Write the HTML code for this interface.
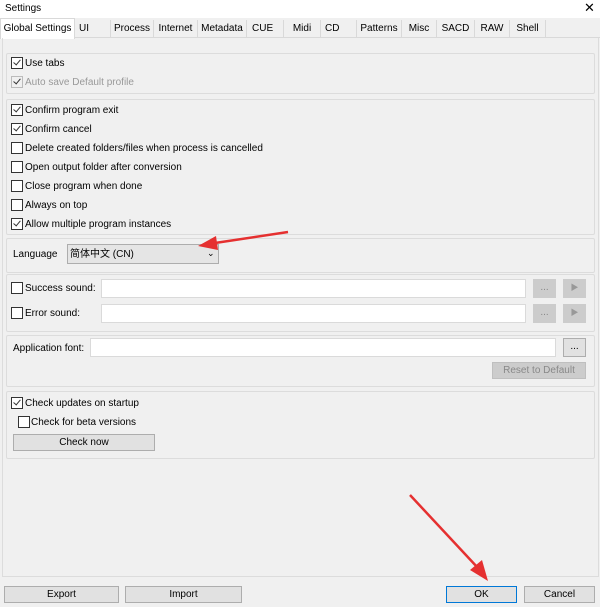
<!DOCTYPE html><html><head><style>
body{margin:0;width:600px;height:607px;background:#f0f0f0;font-family:"Liberation Sans","Noto Sans CJK SC",sans-serif;font-size:10px;color:#000;position:relative;overflow:hidden}
.a{position:absolute}
.t{position:absolute;top:20px;height:17px;line-height:18px;border-right:1px solid #d9d9d9;text-align:center;background:#f0f0f0}
.g{position:absolute;left:6px;width:587px;border:1px solid #dcdcdc;border-radius:2px;background:#f0f0f0}
.cb{position:absolute;width:10px;height:10px;border:1px solid #333;background:#fff}
.cb.c::after{content:"";position:absolute;left:3px;top:0px;width:3px;height:6px;border:solid #333;border-width:0 1.3px 1.3px 0;transform:rotate(40deg)}
.l{position:absolute;line-height:12px;margin-top:1px;margin-left:1px}
.in{position:absolute;background:#fff;border:1px solid #dadada;height:17px}
.bt{position:absolute;background:#e1e1e1;border:1px solid #adadad;text-align:center;line-height:16px;height:15px}
</style></head><body>
<div class="a" style="left:0;top:0;width:600px;height:18px;background:#fff"></div>
<div class="l" style="left:4px;top:2px">Settings</div>
<div class="l" style="left:583px;top:1px;font-size:13px">✕</div>
<div class="a" style="left:0;top:37px;width:600px;height:1px;background:#d9d9d9"></div>
<div class="t" style="left:0;top:18px;height:20px;line-height:20px;width:73px;background:#fff;border:1px solid #d9d9d9;border-bottom:none">Global Settings</div>
<div class="t" style="left:75px;text-align:left;padding-left:4px;width:31px">UI</div>
<div class="t" style="left:111px;width:42px">Process</div>
<div class="t" style="left:154px;width:43px">Internet</div>
<div class="t" style="left:198px;width:48px">Metadata</div>
<div class="t" style="left:247px;text-align:left;padding-left:5px;width:31px">CUE</div>
<div class="t" style="left:284px;width:36px">Midi</div>
<div class="t" style="left:321px;text-align:left;padding-left:4px;width:31px">CD</div>
<div class="t" style="left:357px;width:44px">Patterns</div>
<div class="t" style="left:402px;width:34px">Misc</div>
<div class="t" style="left:437px;width:37px">SACD</div>
<div class="t" style="left:475px;width:34px">RAW</div>
<div class="t" style="left:510px;width:35px">Shell</div>
<div class="a" style="left:2px;top:38px;width:595px;height:538px;border:1px solid #dcdcdc;border-top:none"></div>

<div class="g" style="top:53px;height:39px"></div>
<div class="cb c" style="left:11px;top:57px"></div><div class="l" style="left:24px;top:57px">Use tabs</div>
<div class="cb c" style="left:11px;top:76px;border-color:#bbb;background:#f0f0f0"></div><div class="l" style="left:24px;top:76px;color:#999">Auto save Default profile</div>

<div class="g" style="top:99px;height:134px"></div>
<div class="cb c" style="left:11px;top:104px"></div><div class="l" style="left:24px;top:104px">Confirm program exit</div>
<div class="cb c" style="left:11px;top:123px"></div><div class="l" style="left:24px;top:123px">Confirm cancel</div>
<div class="cb" style="left:11px;top:142px"></div><div class="l" style="left:24px;top:142px">Delete created folders/files when process is cancelled</div>
<div class="cb" style="left:11px;top:161px"></div><div class="l" style="left:24px;top:161px">Open output folder after conversion</div>
<div class="cb" style="left:11px;top:180px"></div><div class="l" style="left:24px;top:180px">Close program when done</div>
<div class="cb" style="left:11px;top:199px"></div><div class="l" style="left:24px;top:199px">Always on top</div>
<div class="cb c" style="left:11px;top:218px"></div><div class="l" style="left:24px;top:218px">Allow multiple program instances</div>

<div class="g" style="top:238px;height:33px"></div>
<div class="l" style="left:12px;top:248px">Language</div>
<div class="a" style="left:67px;top:244px;width:150px;height:18px;background:#e5e5e5;border:1px solid #adadad"></div>
<div class="l" style="left:69px;top:248px">简体中文 (CN)</div>
<div class="l" style="left:206px;top:246px;font-size:9px">⌄</div>

<div class="g" style="top:274px;height:56px"></div>
<div class="cb" style="left:11px;top:282px"></div><div class="l" style="left:24px;top:282px">Success sound:</div>
<div class="in" style="left:101px;top:279px;width:423px"></div>
<div class="bt" style="left:533px;top:279px;width:21px;height:17px;background:#ccc;border-color:#ccc;color:#888">...</div>
<div class="bt" style="left:563px;top:279px;width:21px;height:17px;background:#ccc;border-color:#ccc;color:#999;font-size:8px">▶</div>
<div class="cb" style="left:11px;top:307px"></div><div class="l" style="left:24px;top:307px">Error sound:</div>
<div class="in" style="left:101px;top:304px;width:423px"></div>
<div class="bt" style="left:533px;top:304px;width:21px;height:17px;background:#ccc;border-color:#ccc;color:#888">...</div>
<div class="bt" style="left:563px;top:304px;width:21px;height:17px;background:#ccc;border-color:#ccc;color:#999;font-size:8px">▶</div>

<div class="g" style="top:335px;height:50px"></div>
<div class="l" style="left:12px;top:342px">Application font:</div>
<div class="in" style="left:90px;top:338px;width:464px"></div>
<div class="bt" style="left:563px;top:338px;width:21px;height:17px">...</div>
<div class="bt" style="left:492px;top:362px;width:92px;background:#ccc;border-color:#bfbfbf;color:#888">Reset to Default</div>

<div class="g" style="top:391px;height:66px"></div>
<div class="cb c" style="left:11px;top:397px"></div><div class="l" style="left:24px;top:397px">Check updates on startup</div>
<div class="cb" style="left:18px;top:416px"></div><div class="l" style="left:30px;top:416px">Check for beta versions</div>
<div class="bt" style="left:13px;top:434px;width:140px">Check now</div>

<div class="bt" style="left:4px;top:586px;width:113px">Export</div>
<div class="bt" style="left:125px;top:586px;width:115px">Import</div>
<div class="bt" style="left:446px;top:586px;width:69px;border:1px solid #0078d7">OK</div>
<div class="bt" style="left:524px;top:586px;width:69px">Cancel</div>

<svg class="a" style="left:0;top:0" width="600" height="607">
<line x1="288" y1="232" x2="215" y2="243" stroke="#e53030" stroke-width="2.5"/>
<polygon points="198,246 216,236 218,250" fill="#e53030"/>
<line x1="410" y1="495" x2="478" y2="568" stroke="#e53030" stroke-width="2.5"/>
<polygon points="488,581 470,570 482,560" fill="#e53030"/>
</svg>
</body></html>
